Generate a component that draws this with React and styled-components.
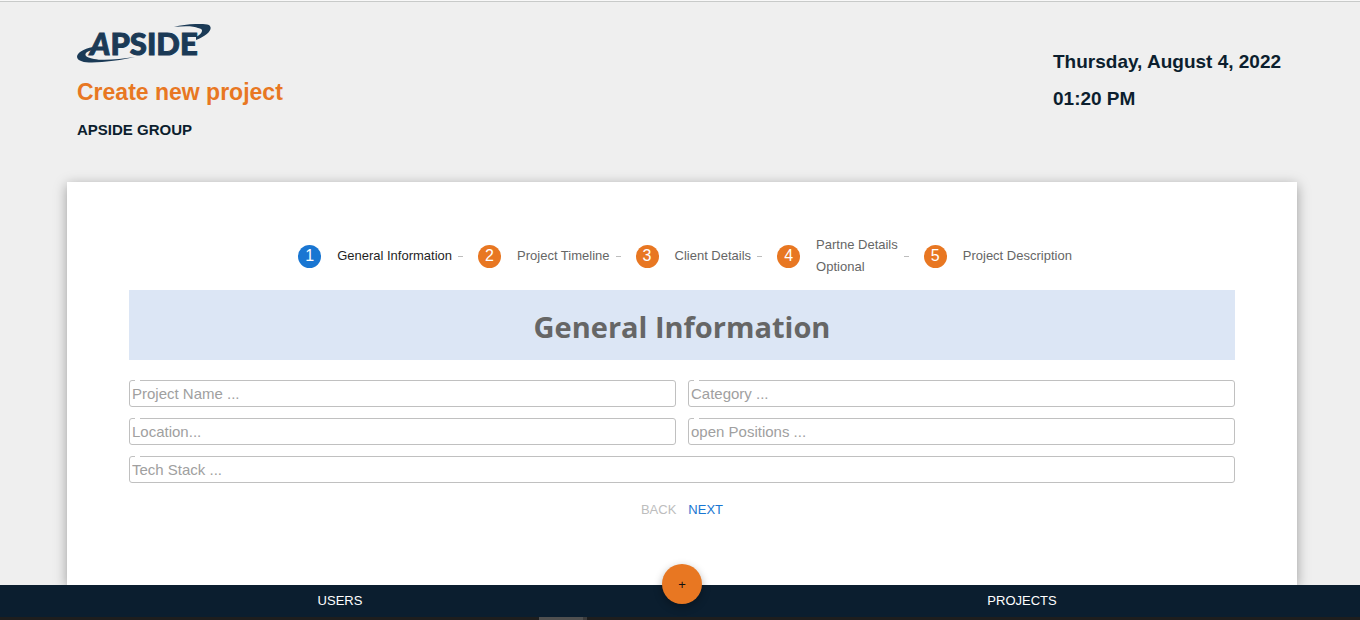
import React from "react";
import styled, { createGlobalStyle } from "styled-components";

const GlobalStyle = createGlobalStyle`
  *, *::before { box-sizing: border-box; }
  body {
    margin: 0;
    background: #efefef;
    color: #0c1e2e;
    font-family: "Liberation Sans", Arial, sans-serif;
  }
`;

const Page = styled.div`
  display: flex;
  flex-direction: column;
  min-height: 100vh;
  overflow: hidden;
  border-top: 1px solid #f8f8f8;
`;

const Header = styled.header`
  display: flex;
  justify-content: space-between;
  padding: 22px 73px 0 77px;
  border-top: 1px solid #c8cac9;
`;

const Brand = styled.div`
  display: flex;
  flex-direction: column;
`;

const Logo = styled.svg`
  display: block;
  width: 136px;
  height: 40px;
  fill: #1b3a56;
`;

const LogoText = styled.text`
  font-family: Lato, "Liberation Sans", sans-serif;
  font-size: 31px;
  font-weight: 900;
  stroke: #1b3a56;
  stroke-width: 1px;
`;

const SlantedLetter = styled.tspan`
  font-style: italic;
`;

const Title = styled.h1`
  margin: 14px 0 0;
  font-size: 23px;
  line-height: 28px;
  color: #e87722;
`;

const Company = styled.h2`
  margin: 14px 0 0;
  font-size: 15px;
  line-height: 20px;
`;

const Clock = styled.div`
  display: flex;
  flex-direction: column;
  gap: 13px;
  padding-top: 26px;
  min-width: 234px;
  font-size: 19px;
  font-weight: 700;
  line-height: 24px;
`;

const Card = styled.main`
  flex: 1;
  margin: 42px 63px 0 67px;
  padding: 52px 62px 60px;
  background: #fff;
  box-shadow: 0 3px 12px rgba(0, 0, 0, 0.35);
`;

const Steps = styled.ol`
  display: flex;
  justify-content: center;
  align-items: center;
  margin: 0;
  padding: 0 0 0 6px;
  list-style: none;
`;

const Step = styled.li`
  display: flex;
  align-items: center;
  font-size: 13px;
  line-height: 22px;
  height: 44px;
  color: ${(p) => (p.$active ? "#1f1f1f" : "#666")};

  &:not(:last-child)::after {
    content: "";
    width: 5px;
    height: 1px;
    margin: 0 15px 0 6px;
    background: #bdbdbd;
  }
`;

const StepNumber = styled.span`
  display: grid;
  place-items: center;
  width: 23px;
  height: 23px;
  margin-right: 16px;
  border-radius: 50%;
  background: ${(p) => (p.$active ? "#1976d2" : "#e87722")};
  color: #fff;
  font-size: 16px;
`;

const StepLabel = styled.span`
  display: flex;
  flex-direction: column;
`;

const Banner = styled.h3`
  margin: 12px 0 20px;
  padding: 15px 0 11px;
  background: #dce6f5;
  color: #666;
  font-family: "Open Sans", "Noto Sans", sans-serif;
  font-size: 29px;
  line-height: 44px;
  text-align: center;
`;

const Fields = styled.div`
  display: grid;
  grid-template-columns: 1fr 1fr;
  gap: 11px 12px;
`;

const Field = styled.label`
  position: relative;
  display: flex;
  grid-column: ${(p) => (p.$wide ? "1 / -1" : "auto")};
  height: 27px;
  border: 1px solid #c0c0c0;
  border-radius: 3px;

  &::before {
    content: "";
    position: absolute;
    top: -1px;
    left: 5px;
    width: 5px;
    height: 1px;
    background: #fff;
  }
`;

const Input = styled.input`
  flex: 1;
  min-width: 0;
  padding: 0 2px;
  border: 0;
  outline: 0;
  background: transparent;
  color: #222;
  font-family: inherit;
  font-size: 15px;

  &::placeholder {
    color: #a0a0a0;
    opacity: 1;
  }
`;

const Actions = styled.div`
  display: flex;
  justify-content: center;
  gap: 12px;
  margin-top: 17px;
`;

const TextButton = styled.button`
  padding: 0;
  border: 0;
  background: none;
  font-family: inherit;
  font-size: 13px;
  line-height: 20px;
  color: #1976d2;

  &:disabled {
    color: #bdbdbd;
  }
`;

const Footer = styled.footer`
  position: relative;
`;

const Nav = styled.nav`
  display: grid;
  grid-template-columns: 1fr 1fr;
  gap: 6px;
  padding-left: 2px;
  background: #0b1e2f;
`;

const NavLink = styled.a`
  font-size: 13px;
  line-height: 32px;
  text-align: center;
  text-decoration: none;
  color: #fff;
`;

const AddButton = styled.button`
  position: absolute;
  top: -21px;
  left: 4px;
  right: 0;
  width: 40px;
  height: 40px;
  margin: 0 auto;
  padding: 0;
  border: 0;
  border-radius: 50%;
  background: #e87722;
  color: #111;
  font-family: inherit;
  font-size: 13px;
  box-shadow: 0 3px 8px rgba(0, 0, 0, 0.3);
`;

const ScrollTrack = styled.div`
  height: 3px;
  padding-left: 539px;
  background: #1e1e1e;
`;

const ScrollThumb = styled.div`
  width: 48px;
  height: 3px;
  border-right: 4px solid #3c3c3c;
  background: #505050;
`;

const steps = [
  ["General Information"],
  ["Project Timeline"],
  ["Client Details"],
  ["Partne Details", "Optional"],
  ["Project Description"],
];

const fields = [
  { name: "projectName", hint: "Project Name ..." },
  { name: "category", hint: "Category ..." },
  { name: "location", hint: "Location..." },
  { name: "openPositions", hint: "open Positions ..." },
  { name: "techStack", hint: "Tech Stack ...", wide: true },
];

function ApsideLogo() {
  return (
    <Logo viewBox="0 0 136 40" role="img" aria-label="Apside">
      <path d="M16 23 C6 25 0 29 0 33 C1 39 13 39 25 38 C38 37 48 35 58 33 C43 35 27 37 17 35 C5 33 7 28 15 26Z" />
      <path d="M97 3 C108 0 124 -1 132 1 C137 5 130 12 119 16 L119 13 C125 10 128 5 121 4 C117 2 107 2 97 3Z" />
      <LogoText x="13" y="31">
        <SlantedLetter>A</SlantedLetter>PSIDE
      </LogoText>
    </Logo>
  );
}

export default function App() {
  return (
    <>
      <GlobalStyle />
      <Page>
        <Header>
          <Brand>
            <ApsideLogo />
            <Title>Create new project</Title>
            <Company>APSIDE GROUP</Company>
          </Brand>
          <Clock>
            <span>Thursday, August 4, 2022</span>
            <span>01:20 PM</span>
          </Clock>
        </Header>
        <Card>
          <Steps>
            {steps.map((lines, i) => (
              <Step key={lines[0]} $active={i === 0}>
                <StepNumber $active={i === 0}>{i + 1}</StepNumber>
                <StepLabel>
                  {lines.map((line) => (
                    <span key={line}>{line}</span>
                  ))}
                </StepLabel>
              </Step>
            ))}
          </Steps>
          <Banner>General Information</Banner>
          <Fields>
            {fields.map((f) => (
              <Field key={f.name} $wide={f.wide} htmlFor={f.name}>
                <Input id={f.name} name={f.name} aria-label={f.hint} placeholder={f.hint} />
              </Field>
            ))}
          </Fields>
          <Actions>
            <TextButton type="button" disabled>BACK</TextButton>
            <TextButton type="button">NEXT</TextButton>
          </Actions>
        </Card>
        <Footer>
          <Nav>
            <NavLink href="#users">USERS</NavLink>
            <NavLink href="#projects">PROJECTS</NavLink>
          </Nav>
          <ScrollTrack>
            <ScrollThumb />
          </ScrollTrack>
          <AddButton type="button">+</AddButton>
        </Footer>
      </Page>
    </>
  );
}
